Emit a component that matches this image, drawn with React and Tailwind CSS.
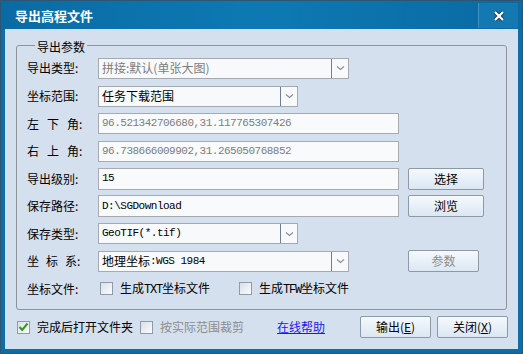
const cjk = "font-['Noto_Sans_CJK_SC',sans-serif]";
const mono = "font-['Liberation_Mono','Noto_Sans_CJK_SC',monospace] text-[11px] tracking-[-0.5px]";
const monoCaps = "font-['Liberation_Mono',monospace] text-[12px] tracking-[-1.2px]";

function Chevron() {
  return (
    <svg width="9" height="6" viewBox="0 0 9 6">
      <path d="M1 1.5 L4.5 4.5 L8 1.5" fill="none" stroke="#8a8f96" strokeWidth="1.2" />
    </svg>
  );
}

function Combo({ width, children, gray }) {
  return (
    <div
      className={`flex h-[21px] border border-[#a5aab1] bg-[#f8f9fb] ${gray ? 'text-[#7d7d7d]' : 'text-black'}`}
      style={{ width }}
    >
      <div className="flex-1 flex items-center pl-[3px] overflow-hidden whitespace-nowrap">{children}</div>
      <div className="w-[17px] border-l border-[#6f7f93] flex items-center justify-center">
        <Chevron />
      </div>
    </div>
  );
}

function Field({ children, gray, h = 'h-[21px]' }) {
  return (
    <div
      className={`w-[301px] ${h} border border-[#a7abb0] bg-[#f8fafc] flex items-center pl-[3px] whitespace-nowrap ${mono} ${gray ? 'text-[#7d7d7d]' : 'text-black'}`}
    >
      {children}
    </div>
  );
}

function Btn({ w, children, disabled }) {
  return (
    <div
      className={`h-[22px] border border-[#8c99a6] rounded-[2px] bg-gradient-to-b from-[#f5f9fd] to-[#dbe7f3] flex items-center justify-center text-[12px] leading-none ${disabled ? 'text-[#8d8d8d]' : 'text-black'}`}
      style={{ width: w }}
    >
      {children}
    </div>
  );
}

function Check({ checked }) {
  return (
    <div className="w-[13px] h-[13px] border border-[#8e9aa8] bg-gradient-to-br from-[#d9e0e8] to-[#fbfcfd] flex items-center justify-center">
      {checked && (
        <svg width="11" height="10" viewBox="0 0 11 10">
          <path d="M1.5 5 L4.2 8 L9.5 1.5" fill="none" stroke="#2f9a1c" strokeWidth="2" />
        </svg>
      )}
    </div>
  );
}

function Row({ label, h, children }) {
  return (
    <div className={`flex items-center ${h}`}>
      <div className="w-[71px] text-[12px] leading-none text-black whitespace-nowrap">{label}</div>
      {children}
    </div>
  );
}

export default function App() {
  return (
    <div className={`w-[523px] h-[354px] bg-[#0b6ea6] flex flex-col border border-[#2d5675] ${cjk}`}>
      {/* 标题栏 */}
      <div className="h-[28px] flex items-center relative bg-gradient-to-r from-[#0a6ba4] via-[#0d79b3] to-[#0a6aa3]">
        <span className="pl-[14px] text-white text-[13px] font-bold leading-none">导出高程文件</span>
        <div className="absolute right-[4px] top-[2px] w-[40px] h-[25px] border-l border-[#3f8fbf] bg-[#1479b1] flex items-center justify-center">
          <svg width="12" height="12" viewBox="0 0 12 12">
            <path d="M2 2 L10 10 M10 2 L2 10" stroke="#1b3f58" strokeWidth="4" />
            <path d="M2 2 L10 10 M10 2 L2 10" stroke="#ffffff" strokeWidth="2.2" />
          </svg>
        </div>
      </div>

      <div className="mx-[4px] h-[320px] bg-[#d5e0ef] flex flex-col">
        <fieldset className="mt-[7px] ml-[11px] w-[491px] border border-[#8e9398] rounded-[3px] pl-[10px] pb-[7px]">
          <legend className="ml-[8px] px-[2px] pt-[4px] text-[12px] leading-[14px] text-black">导出参数</legend>

          <Row label="导出类型:" h="h-[28px]">
            <Combo width={251} gray>
              <span className="text-[12px] leading-none">拼接:默认(单张大图)</span>
            </Combo>
          </Row>
          <Row label="坐标范围:" h="h-[28px]">
            <Combo width={200}>
              <span className="text-[12px] leading-none">任务下载范围</span>
            </Combo>
          </Row>
          <Row label={<><span className="tracking-[8px]">左下</span>角:</>} h="h-[27px]">
            <Field gray>96.521342706680,31.117765307426</Field>
          </Row>
          <Row label={<><span className="tracking-[8px]">右上</span>角:</>} h="h-[28px]">
            <Field gray>96.738666009902,31.265050768852</Field>
          </Row>
          <Row label="导出级别:" h="h-[27px]">
            <Field h="h-[22px]">15</Field>
            <div className="ml-[9px]"><Btn w={76}>选择</Btn></div>
          </Row>
          <Row label="保存路径:" h="h-[28px]">
            <Field h="h-[22px]">D:\SGDownload</Field>
            <div className="ml-[9px]"><Btn w={76}>浏览</Btn></div>
          </Row>
          <Row label="保存类型:" h="h-[27px]">
            <Combo width={200}>
              <span className={mono}>GeoTIF(*.tif)</span>
            </Combo>
          </Row>
          <Row label={<><span className="tracking-[7px]">坐标</span>系:</>} h="h-[28px]">
            <Combo width={251}>
              <span className="text-[12px] leading-none">地理坐标</span>
              <span className={mono}>:WGS 1984</span>
            </Combo>
            <div className="ml-[59px]"><Btn w={71} disabled>参数</Btn></div>
          </Row>
          <Row label="坐标文件:" h="h-[27px]">
            <div className="ml-[2px] flex items-center">
              <Check />
              <span className="ml-[7px] text-[12px] leading-none">
                生成<span className={monoCaps}>TXT</span>坐标文件
              </span>
            </div>
            <div className="ml-[29px] flex items-center">
              <Check />
              <span className="ml-[7px] text-[12px] leading-none">
                生成<span className={monoCaps}>TFW</span>坐标文件
              </span>
            </div>
          </Row>
        </fieldset>

        {/* 底部 */}
        <div className="mt-[6px] h-[22px] flex items-center pl-[12px] text-[12px] leading-none">
          <Check checked />
          <span className="ml-[7px]">完成后打开文件夹</span>
          <div className="ml-[7px]"><Check /></div>
          <span className="ml-[7px] text-[#8d8d8d]">按实际范围裁剪</span>
          <span className="ml-[33px] text-[#1a1aee] underline">在线帮助</span>
          <div className="ml-auto flex gap-[6px] mr-[10px]">
            <Btn w={71}>输出(<span className="underline">E</span>)</Btn>
            <Btn w={71}>关闭(<span className="underline">X</span>)</Btn>
          </div>
        </div>
      </div>
    </div>
  );
}
